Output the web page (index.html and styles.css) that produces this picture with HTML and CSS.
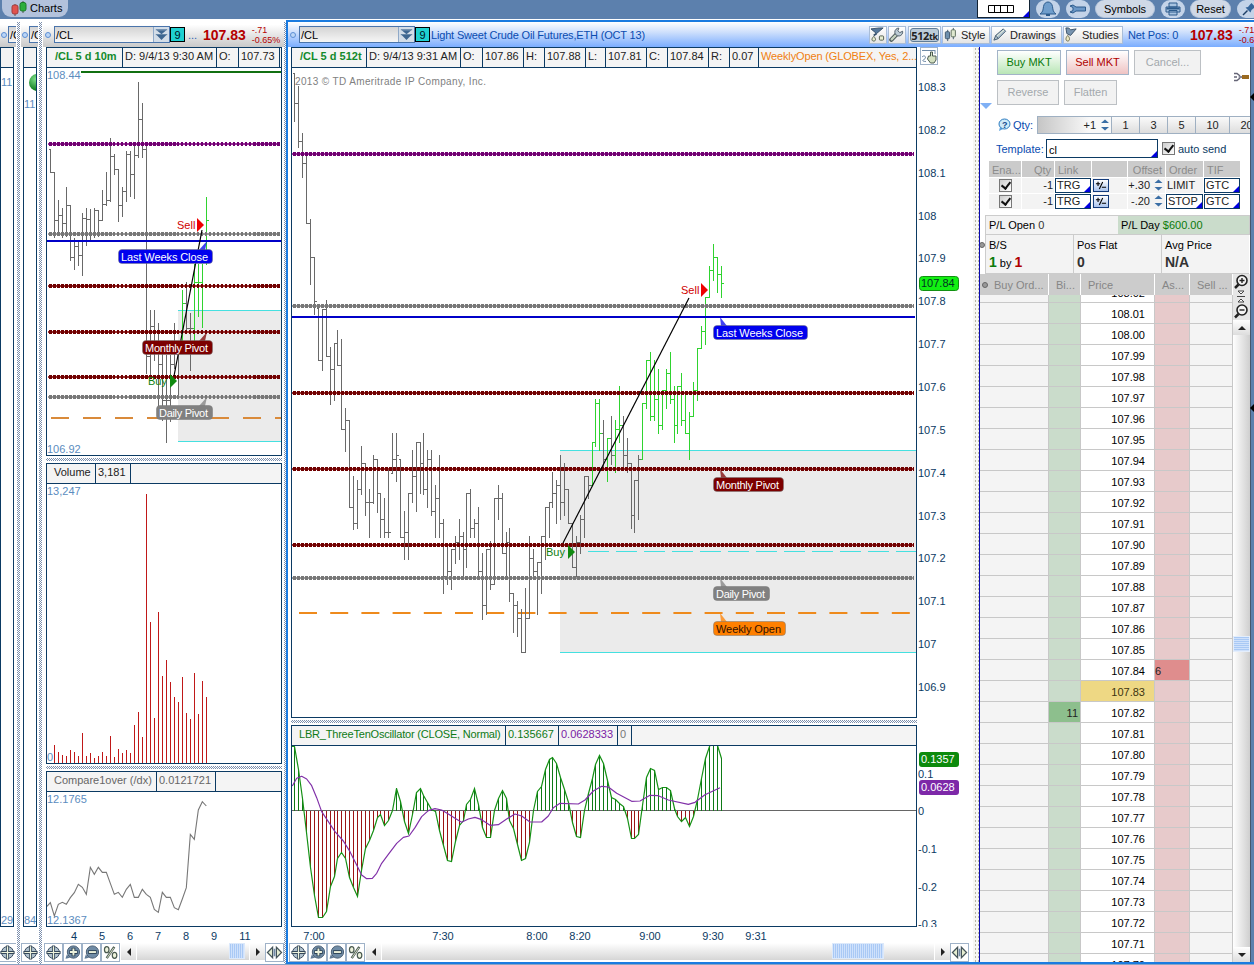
FILE: index.html
```html
<!DOCTYPE html>
<html lang="en">
<head>
<meta charset="utf-8">
<title>Charts</title>
<link rel="stylesheet" href="styles.css">
</head>
<body>
<svg class="defs" width="0" height="0">
  <defs>
    <symbol id="i-cross" viewBox="0 0 18 18"><circle cx="9" cy="9" r="6.3" fill="#aebfcb" stroke="#34475a"/><path d="M9 1.500v15M1.500 9h15" stroke="#34475a" stroke-width="3"/><path d="M9 2.500v13M2.500 9h13" stroke="#eef3dc" stroke-width="1.300"/></symbol>
    <symbol id="i-plus" viewBox="0 0 18 18"><path d="M3 11l-1.500 4.500 5-1z" fill="#5f7a96"/><circle cx="10" cy="8.500" r="6.500" fill="#6f8ba5" stroke="#43586d"/><path d="M10 4v9M5.500 8.500h9" stroke="#2d4255" stroke-width="4"/><path d="M10 4.800v7.400M6.300 8.500h7.400" stroke="#eef3dc" stroke-width="2"/></symbol>
    <symbol id="i-minus" viewBox="0 0 18 18"><path d="M3 11l-1.500 4.500 5-1z" fill="#5f7a96"/><circle cx="10" cy="8.500" r="6.500" fill="#6f8ba5" stroke="#43586d"/><path d="M5.500 8.500h9" stroke="#2d4255" stroke-width="4"/><path d="M6.300 8.500h7.400" stroke="#eef3dc" stroke-width="2"/></symbol>
    <symbol id="i-pct" viewBox="0 0 18 18"><path d="M13 3L5 15" stroke="#4a5a50" stroke-width="2.600"/><path d="M12.500 4L5.500 14.500" stroke="#dfe8cf" stroke-width="1"/><ellipse cx="5" cy="6" rx="2.400" ry="3.200" fill="#eef3dc" stroke="#4a5a50" stroke-width="1.300"/><ellipse cx="13.300" cy="12" rx="2.400" ry="3.200" fill="#eef3dc" stroke="#4a5a50" stroke-width="1.300"/></symbol>
    <symbol id="i-fit" viewBox="0 0 18 18"><path d="M7 3.500L1.500 9 7 14.500zM11 3.500L16.500 9 11 14.500z" fill="#e6eed2" stroke="#44545a" stroke-width="1.300"/><path d="M9 5v8" stroke="#6f8aa5" stroke-width="1.800"/></symbol>
    <symbol id="i-drop" viewBox="0 0 16 14"><path d="M2 1h12l-6 5zM2 7h12l-6 6z" fill="#3f6791"/><path d="M1 .5h14M1 6.500h14" stroke="#3f6791"/></symbol>
    <symbol id="i-wrench" viewBox="0 0 16 16"><path d="M2.500 13.500L9 7" stroke="#4c5a5a" stroke-width="4.500" stroke-linecap="round"/><path d="M2.800 13.200L9 7" stroke="#c6d3c0" stroke-width="2.300" stroke-linecap="round"/><path d="M14.500 4.500a4.200 4.200 0 1 1-4-3.300L9.500 4l2 2z" fill="#bccbd4" stroke="#4c5a66"/></symbol>
    <symbol id="i-flask" viewBox="0 0 16 16"><path d="M1 2l6 5 7-6-4 0z" fill="#56789c" stroke="#36506b"/><path d="M7 7l-3 2" stroke="#36506b" stroke-width="2"/><path d="M4 10c-3 3-2 5 0 5s3-2 0-5z" fill="#e6ecd0" stroke="#505c4c"/><rect x="10" y="9.500" width="4.500" height="4.500" rx="1" fill="#e6ecd0" stroke="#505c4c"/></symbol>
    <symbol id="i-funnel" viewBox="0 0 16 16"><path d="M2 1h3l2 2 6-1-6 7-4-2z" fill="#7894b0" stroke="#3c5268"/><path d="M4 9c-3 3-2 6 0 6s3-3 0-6z" fill="#ece8c2" stroke="#6a6a4c"/></symbol>
    <symbol id="i-candles" viewBox="0 0 16 16"><path d="M5 3v12M11 1v12" stroke="#3f566c"/><rect x="2.500" y="5" width="4.500" height="7.500" rx="1" fill="#6f90ae" stroke="#3f566c"/><rect x="8.700" y="3" width="4.500" height="7.500" rx="1" fill="#dfe8cf" stroke="#5b6b5b"/></symbol>
    <symbol id="i-pencil" viewBox="0 0 16 16"><path d="M2 14l2-5 8-7 2.500 2.500-8 8z" fill="#aec1cf" stroke="#3f566c"/><path d="M4 9l2.700 3.500" stroke="#3f566c"/><path d="M5 10l8-7" stroke="#eef3dc"/></symbol>
    <symbol id="i-spin" viewBox="0 0 10 14"><path d="M1 5l4-3.500L9 5zM1 9l4 3.500L9 9z" fill="#3a6ea5"/></symbol>
    <symbol id="i-mag" viewBox="0 0 16 16"><path d="M5.500 10.500L2 14" stroke="#222" stroke-width="2.500"/><circle cx="9" cy="6.500" r="5" fill="#f4f4f4" stroke="#222" stroke-width="1.600"/></symbol>
  </defs>
</svg>

<header class="topbar">
  <div class="tab"><svg width="18" height="17" viewBox="0 0 18 17"><path d="M5 4v12M13 1v12" stroke="#555"/><rect x="2" y="5" width="6" height="9" rx="2" fill="#e0524e" stroke="#a23c3c"/><rect x="10" y="2.500" width="6" height="8.500" rx="2" fill="#2fae3c" stroke="#1c7a28"/></svg>Charts</div>
  <div class="tools">
    <div class="layout-pick"><svg width="26" height="8" viewBox="0 0 26 8"><path d="M.5.500h25v7H.5zM6.500.500v7M12.500.500v7M19.500.500v7" fill="#fff" stroke="#000"/></svg><i class="corner"></i></div>
    <div class="round"><svg width="18" height="16" viewBox="0 0 18 16"><path d="M1 13c3-2 3-4 3.500-7.500C5 2.500 7 1 9 1s4 1.500 4.500 4.500C14 9 14 11 17 13z" fill="#6f9dcb" stroke="#2c5b8c"/><path d="M7 14h4" stroke="#2c5b8c" stroke-width="2"/></svg></div>
    <div class="round"><svg width="18" height="10" viewBox="0 0 18 10"><path d="M1 2l3-1 3 2h9.500v4H7L4 9 1 8l3-1.500v-3z" fill="#6b97c6" stroke="#2c5b8c"/></svg></div>
    <div class="pill pill-symbols">Symbols</div>
    <div class="round"><svg width="16" height="14" viewBox="0 0 16 14"><path d="M4 1h8v4H4zM1 5h14v5H1zM4 8.500h8V13H4z" fill="#a7c3e0" stroke="#2c5b8c"/><path d="M1.500 6.500h13" stroke="#2c5b8c" stroke-width="2"/></svg></div>
    <div class="pill pill-reset">Reset</div>
    <div class="round"><svg width="14" height="14" viewBox="0 0 14 14"><path d="M1 13l4.500-4.500" stroke="#1d3f66" stroke-width="1.500"/><path d="M3.500 5.500l5 5 1-2.500 2.500-2 1-1-3.500-4-1.500 1.500-2 2.500z" fill="#35659a"/></svg></div>
  </div>
</header>

<main class="workspace">
  <section class="strip strip-a">
    <div class="head"><i class="dot"></i><div class="symbox">/C</div></div>
    <div class="stripbox"><div class="stripinfo"></div><div class="striplabels"><span class="s1">11</span><span class="s2">29</span></div></div>
    <div class="foot"><span class="tb"><svg><use href="#i-cross"/></svg></span></div>
  </section>
  <div class="split"></div>
  <section class="strip strip-b">
    <div class="head"><i class="dot"></i><div class="symbox">/C</div></div>
    <div class="stripbox"><div class="stripinfo"></div><div class="striplabels"><i class="ball"></i><span class="s1">11</span><span class="s2">84</span></div></div>
    <div class="foot"><span class="tb"><svg><use href="#i-cross"/></svg></span></div>
  </section>
  <div class="split"></div>

  <section class="left">
    <div class="head"><i class="dot"></i><div class="symbox sym">/CL<span class="drop"><svg width="13" height="12"><use href="#i-drop"/></svg></span></div><b class="nine">9</b><span class="more">...</span><b class="last">107.83</b><span class="chg">-.71<br>-0.65%</span></div>
    <div class="info"><span class="study" style="width:76px">/CL 5 d 10m</span><span style="width:94px">D: 9/4/13 9:30 AM</span><span style="width:22px">O:</span><span style="width:41px">107.73</span></div>
    <svg class="plot" id="left-price" width="236" height="388" viewBox="46 68 236 388"></svg>
    <div class="hsplit"></div>
    <div class="info"><span class="ind" style="width:49px">Volume</span><span style="width:35px">3,181</span></div>
    <svg class="plot" id="left-vol" width="236" height="280" viewBox="46 484 236 280"></svg>
    <div class="hsplit"></div>
    <div class="info dim"><span class="ind" style="width:110px">Compare1over (/dx)</span><span style="width:59px">0.0121721</span></div>
    <svg class="plot" id="left-cmp" width="236" height="135" viewBox="46 792 236 135"></svg>
    <svg class="times" id="left-times" width="236" height="16" viewBox="46 927 236 16"></svg>
    <div class="foot"><span class="tb"><svg><use href="#i-cross"/></svg></span><span class="tb"><svg><use href="#i-plus"/></svg></span><span class="tb"><svg><use href="#i-minus"/></svg></span><span class="tb"><svg><use href="#i-pct"/></svg></span><div class="scroll"><i class="arr al"></i><div class="track"><i class="thumb thumb-l"></i></div><i class="arr ar"></i></div><span class="tb"><svg><use href="#i-fit"/></svg></span></div>
  </section>
  <div class="split split-c"></div>

  <section class="active">
    <div class="head head-active"><i class="dot"></i><div class="symbox sym">/CL<span class="drop"><svg width="13" height="12"><use href="#i-drop"/></svg></span></div><b class="nine">9</b><span class="title">Light Sweet Crude Oil Futures,ETH (OCT 13)</span>
      <div class="menu"><span class="mb"><svg><use href="#i-flask"/></svg></span><span class="mb"><svg><use href="#i-wrench"/></svg></span><span class="mb mb-tk"><b>512<small>tk</small></b></span><span class="mb mb-style"><svg><use href="#i-candles"/></svg>Style</span><span class="mb mb-draw"><svg><use href="#i-pencil"/></svg>Drawings</span><span class="mb mb-stud"><svg><use href="#i-funnel"/></svg>Studies</span></div>
      <span class="net">Net Pos: 0</span><b class="last">107.83</b><span class="chg">-.71<br>-0.65%</span></div>
    <div class="body">
      <div class="charts">
        <div class="row">
          <div class="col">
            <div class="info"><span class="study" style="width:75px">/CL 5 d 512t</span><span style="width:94px">D: 9/4/13 9:31 AM</span><span style="width:22px">O:</span><span style="width:41px">107.86</span><span style="width:21px">H:</span><span style="width:41px">107.88</span><span style="width:20px">L:</span><span style="width:41px">107.81</span><span style="width:21px">C:</span><span style="width:41px">107.84</span><span style="width:21px">R:</span><span style="width:29px">0.07</span><span class="orange">WeeklyOpen (GLOBEX, Yes, 2...</span></div>
            <svg class="plot" id="main-price" width="626" height="650" viewBox="291 68 626 650"></svg>
          </div>
          <div class="axis">
            <span class="hand"><svg width="16" height="16" viewBox="0 0 16 16"><path d="M1 2.500h13M14 2v4M1 9c3-3 5 1 2 2.500s0 2 2 2" fill="none" stroke="#6f8aa5"/><path d="M7.500 8h2V4h2v4h3.500v4l-2 3h-3.500l-3-4z" fill="#d3dfc0" stroke="#4a5a50"/></svg></span>
            <svg id="axis-price" width="56" height="650" viewBox="917 68 56 650"></svg>
          </div>
        </div>
        <div class="hsplit hsplit-m"></div>
        <div class="row">
          <div class="col">
            <div class="info"><span class="ind green osc-name" style="width:214px">LBR_ThreeTenOscillator (CLOSE, Normal)</span><span class="green" style="width:53px">0.135667</span><span class="purple" style="width:59px">0.0628333</span><span class="grey" style="width:14px">0</span></div>
            <svg class="plot" id="main-osc" width="626" height="181" viewBox="291 746 626 181"></svg>
          </div>
          <svg id="axis-osc" width="56" height="202" viewBox="917 725 56 202"></svg>
        </div>
        <svg class="times" id="main-times" width="680" height="16" viewBox="291 927 680 16"></svg>
        <div class="foot"><span class="tb"><svg><use href="#i-cross"/></svg></span><span class="tb"><svg><use href="#i-plus"/></svg></span><span class="tb"><svg><use href="#i-minus"/></svg></span><span class="tb"><svg><use href="#i-pct"/></svg></span><div class="scroll"><i class="arr al"></i><div class="track"><i class="thumb thumb-m"></i></div><i class="arr ar"></i></div><span class="tb"><svg><use href="#i-fit"/></svg></span></div>
      </div>
      <div class="gutter"><i class="fold"></i></div>
      <aside class="trade">
        <svg class="tool" width="16" height="10" viewBox="0 0 16 10"><path d="M1 1.500h3l2.500 2v3l-2.500 2H1M1 5h3" fill="none" stroke="#667" stroke-width="1.500"/><path d="M6 5h3" stroke="#889" stroke-width="2"/><path d="M9 5h7" stroke="#9a6a20" stroke-width="4"/></svg>
        <div class="btns"><span class="btn buy">Buy MKT</span><span class="btn sell">Sell MKT</span><span class="btn off w67">Cancel...</span></div>
        <div class="btns btns2"><span class="btn off w62">Reverse</span><span class="btn off w53">Flatten</span></div>
        <div class="qty"><svg width="14" height="14" viewBox="0 0 14 14"><path d="M3 9l-1 4 4-2z" fill="#5aa0dc"/><ellipse cx="7.500" cy="6" rx="5.500" ry="5" fill="#cfeaf8" stroke="#2c7cc0"/><text x="5" y="9.500" class="q">?</text></svg><label>Qty:</label><span class="num">+1<svg width="12" height="14"><use href="#i-spin"/></svg></span><span class="q28">1</span><span class="q28">3</span><span class="q28">5</span><span class="q34">10</span><span class="q34">20</span></div>
        <div class="tpl"><label>Template:</label><span class="tin">cl<i class="corner"></i></span><i class="chk"></i><span class="auto">auto send</span></div>
        <div class="orders">
          <b>Ena...</b><b class="r">Qty</b><b>Link</b><b></b><b class="r">Offset</b><b>Order</b><b>TIF</b>
          <span class="c"><i class="chk"></i></span><span class="r">-1</span><span class="pick">TRG<i class="corner"></i></span><span><svg class="pm" width="16" height="13" viewBox="0 0 16 13"><path d="M2 4.500h5M4.500 2v5M6 10.500L10 2.500M9 8.500h5" stroke="#000" stroke-width="1.300"/></svg></span><span class="r">+.30<svg width="11" height="14"><use href="#i-spin"/></svg></span><span>LIMIT</span><span class="pick">GTC<i class="corner"></i></span>
          <span class="c"><i class="chk"></i></span><span class="r">-1</span><span class="pick">TRG<i class="corner"></i></span><span><svg class="pm" width="16" height="13" viewBox="0 0 16 13"><path d="M2 4.500h5M4.500 2v5M6 10.500L10 2.500M9 8.500h5" stroke="#000" stroke-width="1.300"/></svg></span><span class="r">-.20<svg width="11" height="14"><use href="#i-spin"/></svg></span><span class="pick">STOP<i class="corner"></i></span><span class="pick">GTC<i class="corner"></i></span>
        </div>
        <div class="pl"><span>P/L Open <u>0</u></span><span class="day">P/L Day <u>$600.00</u></span></div>
        <div class="pos"><i class="gdot side"></i><div>B/S<p><b class="g">1</b> by <b class="rd">1</b></p></div><div>Pos Flat<p><b>0</b></p></div><div>Avg Price<p><b>N/A</b></p></div></div>
        <div class="ladder">
          <div class="ltable">
            <div class="lhead"><span><i class="gdot"></i>Buy Ord...</span><span>Bi...</span><span>Price</span><span>As...</span><span>Sell ...</span></div>
            <div class="lbody"><div id="rows"></div></div>
          </div>
          <div class="vbar"><svg width="16" height="16" viewBox="0 0 16 16"><use href="#i-mag"/><path d="M6.500 6.500h5M9 4v5" stroke="#222" stroke-width="1.400"/></svg><svg width="16" height="13" viewBox="0 0 16 13"><path d="M4 6.500h8" stroke="#444"/><path d="M5 1h6L8 4zM5 12h6L8 9z" fill="#fff" stroke="#444"/></svg><svg width="16" height="17" viewBox="0 0 16 16"><use href="#i-mag"/><path d="M6.500 6.500h5" stroke="#222" stroke-width="1.400"/></svg><i class="arr au"></i><div class="vtrack"><i class="vthumb"></i></div><i class="arr ad"></i></div>
        </div>
      </aside>
      <div class="edge"><i></i><i class="e2"></i></div>
    </div>
  </section>
</main>
<script src="charts.js"></script>
</body>
</html>
```
FILE: styles.css
```css
* { box-sizing: border-box; }
body { margin: 0; width: 1254px; height: 965px; overflow: hidden; background: #5c80ad; font: 11px/14px "Liberation Sans", Arial, sans-serif; color: #222; display: flex; flex-direction: column; }
.defs { position: absolute; }
svg { display: block; flex: none; }
svg text { font: 11px "Liberation Sans", Arial, sans-serif; }
i, em { font-style: normal; }

.topbar { height: 19px; flex: none; display: flex; justify-content: space-between; background: #5c80ad; }
.tab { width: 66px; height: 17px; margin-left: 2px; padding-left: 8px; display: flex; align-items: center; gap: 2px; background: #b3c2dc; border-radius: 0 0 9px 9px; font-size: 11px; line-height: 19px; color: #000; }
.tools { display: flex; width: 277px; overflow: hidden; }
.layout-pick { width: 53px; height: 18px; flex: none; background: #fff; border: 1px solid #123; border-top: 0; display: flex; align-items: center; padding-left: 10px; margin-right: 6px; position: relative; }
.round { width: 24px; height: 18px; flex: none; border-radius: 9px; background: #c3d3e8; display: flex; align-items: center; justify-content: center; margin-right: 6px; }
.pill { height: 18px; flex: none; background: #cfd8e6; border: 1px solid #b4c4da; border-top: 0; border-radius: 9px; text-align: center; line-height: 19px; color: #000; margin: 0 6px 0 -1px; }
.pill-symbols { width: 60px; }
.pill-reset { width: 41px; }

.workspace { display: flex; flex: 1; height: 946px; background: #fff; border-bottom: 1px solid #8aa4c4; }
.split { width: 5px; flex: none; margin-top: 3px; background: repeating-conic-gradient(#7d90ae 0 25%, #fff 0 50%) 1px 0 / 2px 2px; border-left: 1px solid #fff; border-right: 1px solid #fff; }
.split-c { width: 2px; border: 0; }
.strip { display: flex; flex-direction: column; overflow: hidden; flex: none; }
.strip-a { width: 16px; }
.strip-b { width: 17px; }
.head { height: 25px; margin-top: 3px; flex: none; display: flex; align-items: center; background: linear-gradient(#fff, #fff 10%, #c9c9c9); white-space: nowrap; overflow: hidden; }
.dot { width: 6px; height: 6px; flex: none; border: 1px solid #5d8fd4; border-radius: 50%; background: #bcd6f6; margin: 0 3px 0 2px; }
.strip .dot { margin-left: 1px; margin-right: 1px; }
.symbox { height: 17px; border: 1px solid #4a74ab; background: linear-gradient(#d4d4d4, #f6f6f6); padding-left: 1px; line-height: 17px; color: #000; flex: none; display: flex; justify-content: space-between; }
.sym { width: 116px; }
.drop { width: 16px; border-left: 1px solid #8fa9c8; background: #d3dde8; display: flex; align-items: center; justify-content: center; }
.nine { width: 15px; height: 15px; flex: none; border: 1px solid #000; background: #1fd0d0; text-align: center; line-height: 14px; font-weight: normal; color: #012; }
.more { color: #2a62b8; margin: 0 5px 0 3px; width: 10px; }
.last { font-size: 14px; color: #b40000; margin-right: 6px; }
.chg { font-size: 9px; line-height: 10px; color: #b40000; padding-top: 1px; }
.stripbox { width: 14px; height: 880px; border: 1px solid #0b3a63; background: #fff; }
.strip-b .stripbox { margin-left: 2px; }
.stripinfo { height: 20px; border-bottom: 1px solid #0b3a63; background: #f3f3f3; }
.striplabels { position: relative; color: #5b8cc0; height: 858px; overflow: hidden; }
.s1, .s2 { position: absolute; left: 0; top: 7px; }
.strip-b .s1 { top: 29px; }
.s2 { top: 845px; }
.ball { position: absolute; left: 5px; top: 6px; width: 17px; height: 17px; border-radius: 50%; background: radial-gradient(circle at 40% 30%, #7fe08a, #128022 70%); }
.foot { display: flex; height: 19px; margin-top: 0; flex: none; align-items: stretch; }
.strip .foot { margin-top: 16px; margin-left: -2px; }
.strip-b .foot { margin-left: 0; }
.tb { width: 19px; flex: none; border: 1px solid #9fb2c8; background: #fff; }
.tb svg { width: 17px; height: 17px; }
.scroll { flex: 1; display: flex; gap: 1px; margin-left: 1px; }
.arr { width: 15px; height: 17px; flex: none; background: linear-gradient(#fff, #ddd); display: flex; align-items: center; justify-content: center; }
.arr::after { content: ""; border: 4px solid transparent; }
.al::after { border-right-color: #222; border-left: 0; }
.ar::after { border-left-color: #222; border-right: 0; }
.au::after { border-bottom-color: #222; border-top: 0; }
.ad::after { border-top-color: #222; border-bottom: 0; }
.track { flex: 1; height: 17px; background: linear-gradient(#fff, #d6d6d6); display: flex; }
.thumb { height: 16px; background: repeating-linear-gradient(90deg, #a9c9f5 0 1px, #cfe1fb 1px 2px); border: 1px solid #dce9fb; }
.thumb-l { width: 16px; margin-left: 92px; }
.thumb-m { width: 52px; margin-left: 450px; }

.left { width: 241px; flex: none; display: flex; flex-direction: column; }
.left > .info, .left > .plot, .left > .hsplit, .left > .times { margin-left: 3px; }
.left > .foot { margin-left: 1px; width: 240px; }
.left > .head, .strip > .head { color: #000; }
.info { height: 21px; flex: none; width: 236px; border: 1px solid #0b3a63; background: #f4f4f4; display: flex; white-space: nowrap; overflow: hidden; }
.info span { border-right: 1px solid #0b3a63; padding-left: 2px; line-height: 17px; flex: none; overflow: hidden; }
.info .study { padding-left: 8px; font-weight: bold; color: #138a2c; }
.info .ind { padding-left: 7px; }
.info.dim { color: #666; }
.info .osc-name { letter-spacing: -.2px; }
.info .orange { color: #f08010; flex: 1; border: 0; padding-right: 0; letter-spacing: -.14px; }
.green { color: #0e7a16; }
.purple { color: #7a22a4; }
.grey { color: #777; }
.hsplit { height: 7px; width: 236px; flex: none; background: repeating-conic-gradient(#7d90ae 0 25%, #fff 0 50%) 0 0 / 2px 2px content-box; padding: 2px 0; }

.active { width: 968px; flex: none; border: 2px solid #1a7be0; border-right: 0; margin-top: 1px; display: flex; flex-direction: column; height: 944px; }
.head-active { margin-top: 0; height: 25px; background: linear-gradient(#fff, #cfe0fc 40%, #7aadff); }
.title { color: #0a4cb0; margin-left: 1px; width: 438px; flex: none; letter-spacing: -.17px; }
.menu { display: flex; gap: 1px; height: 18px; flex: none; }
.mb { height: 18px; border: 1px solid #a9bdd8; background: linear-gradient(#fff, #e4e4e4); display: flex; align-items: center; gap: 1px; width: 18px; }
.mb svg { width: 15px; height: 15px; }
.mb-tk { width: 33px; margin-left: 1px; padding: 1px; }
.mb-tk b { flex: 1; height: 14px; border-radius: 3px; background: #bccbd8; border: 1px solid #5f7c98; text-align: center; font: bold 11px/13px "Open Sans", "Liberation Sans", sans-serif; letter-spacing: -.4px; }
.mb-tk small { font-size: 9px; }
.mb-style { width: 48px; gap: 3px; }
.mb-draw { width: 71px; gap: 3px; }
.mb-stud { width: 60px; gap: 3px; }
.net { color: #0a4cb0; margin-left: 5px; width: 62px; flex: none; letter-spacing: -.1px; }
.body { display: flex; flex: 1; min-height: 0; }
.charts { width: 685px; flex: none; display: flex; flex-direction: column; }
.row { display: flex; margin-left: 3px; }
.row .info { width: 626px; }
.hsplit-m { width: 626px; margin-left: 3px; }
.charts .times { margin-left: 3px; }
.charts .foot { margin-left: 1px; width: 680px; }
.axis { position: relative; padding-top: 21px; }
.hand { position: absolute; left: 3px; top: 0; border: 1px solid #9fb2c8; padding: 0; }
.gutter { width: 7px; flex: none; background: radial-gradient(circle, #b5b5a5 .7px, transparent .8px) 1px 0 / 3px 4px #f6f6f3; border-right: 1px solid #0b0bb0; position: relative; }
.fold { position: absolute; left: 7px; top: 56px; border: 6px solid transparent; border-top-color: #7fb0f5; border-bottom: 0; z-index: 1; }

.trade { width: 270px; flex: none; position: relative; display: flex; flex-direction: column; background: #fff; overflow: hidden; }
.tool { position: absolute; left: 253px; top: 25px; }
.btns { display: flex; gap: 5px; padding: 3px 0 0 17px; height: 28px; flex: none; }
.btns2 { padding-top: 5px; height: 32px; }
.btn { height: 25px; line-height: 22px; text-align: center; border: 1px solid #a3b4c8; }
.buy { width: 64px; background: linear-gradient(#fff, #b9e6b6); color: #0a7a0a; }
.sell { width: 63px; background: linear-gradient(#fff, #efc3c3); color: #b00000; }
.off { background: #f2f2f2; color: #a3a9ad; border-color: #bcc0c4; }
.w67 { width: 67px; }
.w62 { width: 62px; }
.w53 { width: 53px; }
.qty { display: flex; align-items: center; padding-left: 17px; height: 18px; margin-top: 9px; flex: none; white-space: nowrap; }
.q { fill: #124a8c; font-weight: bold; font-size: 9px; }
.qty label, .tpl label { color: #0a4cb0; }
.qty label { width: 26px; padding-left: 2px; flex: none; }
.num { width: 75px; flex: none; height: 18px; border: 1px solid #9fb0c2; background: linear-gradient(90deg, #c6c6c6, #f8f8f8 70%); display: flex; justify-content: flex-end; align-items: center; gap: 3px; }
.q28, .q34 { width: 28px; flex: none; height: 18px; line-height: 16px; text-align: center; background: linear-gradient(#fafafa, #ddd); border: 1px solid #9fb0c2; border-left: 0; }
.q34 { width: 34px; }
.tpl { display: flex; align-items: center; height: 19px; margin-top: 5px; padding-left: 16px; flex: none; }
.tpl label { width: 50px; }
.tin { width: 112px; height: 19px; border: 1px solid #0b3a63; position: relative; padding: 2px 2px; line-height: 17px; color: #000; margin-right: 4px; }
.corner { position: absolute; right: 0; bottom: 0; border: 3.5px solid #0000e0; border-top-color: transparent; border-left-color: transparent; }
.chk { width: 13px; height: 13px; border: 1px solid #777; background: linear-gradient(135deg, #ccc, #fff); display: inline-block; position: relative; }
.chk::after { content: ""; position: absolute; left: 3px; top: 0; width: 4px; height: 7px; border: solid #111; border-width: 0 2px 2px 0; transform: rotate(38deg); }
.auto { color: #0b3a63; margin-left: 3px; }
.orders { display: grid; grid-template-columns: 32px 32px 36px 35px 37px 37px 36px; grid-template-rows: 16px 15px 15px; gap: 1px; margin: 3px 0 0 9px; width: 251px; flex: none; height: 48px; }
.orders > * { background: #f3f3f3; white-space: nowrap; overflow: hidden; line-height: 15px; padding-left: 1px; position: relative; }
.orders b { background: #cbcbcb; color: #8b8b8b; font-weight: normal; padding-left: 3px; line-height: 18px; }
.orders .r { display: flex; justify-content: flex-end; padding-right: 3px; gap: 3px; }
.orders span.r { padding-right: 1px; }
.orders .c { padding-left: 10px; line-height: 12px; padding-top: 1px; }
.orders .pick { border: 1px solid #0b3a63; background: #fff; line-height: 13px; }
.pm { margin-top: 1px; border: 1px solid #123a7a; background: linear-gradient(#fff, #a9c4ee); }
.pl { display: flex; height: 20px; margin: 6px 0 0 5px; line-height: 18px; flex: none; border: 1px solid #ccc; color: #000; }
.pl span { width: 132px; padding-left: 3px; background: #f3f3f3; }
.pl .day { flex: 1; background: #cadccb; }
.pl u { text-decoration: none; color: #333; }
.pl .day u { color: #0a7a0a; }
.pos { display: flex; height: 39px; margin-left: 5px; flex: none; color: #000; position: relative; }
.pos div { width: 88px; border: 1px solid #ccc; border-top: 0; border-right: 0; background: #f3f3f3; padding: 3px 0 0 3px; flex: none; }
.pos p { margin: 3px 0 0; }
.pos p b { font-size: 14px; color: #333; }
.pos p .g { color: #0a7a0a; }
.pos p .rd { color: #b00000; }
.ladder { display: flex; flex: 1; min-height: 0; }
.ltable { width: 253px; flex: none; display: flex; flex-direction: column; overflow: hidden; }
.lhead, .lrow { display: grid; grid-template-columns: 69px 32px 74px 35px 43px; flex: none; }
.lhead { height: 21px; background: #ccc; color: #868686; line-height: 22px; }
.lhead span { border-right: 1px solid #fff; padding-left: 7px; white-space: nowrap; }
.lhead span:first-child { padding-left: 2px; }
.gdot { display: inline-block; width: 6px; height: 6px; border-radius: 50%; background: #999; border: 1px solid #666; margin: 0 6px 1px 0; }
.gdot.side { position: absolute; left: -6px; top: 7px; margin: 0; }
.lbody { flex: 1; min-height: 0; overflow: hidden; }
#rows { margin-top: -13px; }
.lrow { height: 21px; line-height: 23px; }
.lrow span { border-right: 1px solid #c8c8c8; border-bottom: 1px solid #c8c8c8; background: #f4f4f4; overflow: hidden; }
.lrow .bid { background: #cadccb; text-align: right; padding-right: 2px; }
.lrow .px { background: #fff; color: #000; text-align: right; padding-right: 9px; }
.lrow .ask { background: #e7cacb; padding-left: 0; }
.lrow .bid.hit { background: #8dbf8d; }
.lrow .ask.hit { background: #df8d8d; }
.lrow .px.hit { background: #eed884; color: #3c3410; }
.vbar { width: 17px; display: flex; flex-direction: column; background: #e6e6e6; }
.vbar .arr { height: 15px; width: 17px; }
.vtrack { flex: 1; background: linear-gradient(90deg, #fff, #cfcfcf); padding-top: 301px; }
.vthumb { display: block; height: 16px; background: repeating-linear-gradient(#a9c9f5 0 1px, #cfe1fb 1px 2px); border: 1px solid #e4eefc; }
.edge { flex: 1; background: #5c80ad; border-left: 1px solid #46566c; position: relative; }
.edge i { position: absolute; right: 0; top: 46px; border: 4px solid transparent; border-right: 4px solid #000; border-left: 0; }
.edge .e2 { top: 357px; }

.ax { fill: #0b3a63; }
.lite { fill: #5b8cc0; }
.bar { fill: none; stroke: #696969; stroke-width: 1; }
.bar.up { stroke: #2fd32f; }
.crisp { shape-rendering: crispEdges; }
```
FILE: charts.js
```js
const add = (id, html) => { document.getElementById(id).innerHTML += html; };
const text = (x, y, s, cls = 'ax', extra = '') => `<text x="${x}" y="${y}" class="${cls}" ${extra}>${s}</text>`;
const line = (x1, y1, x2, y2, color, w = 1, extra = '') =>
  `<line x1="${x1}" y1="${y1}" x2="${x2}" y2="${y2}" stroke="${color}" stroke-width="${w}" ${extra}/>`;

// A pivot level: thin line carrying small square beads.
const beads = (x1, x2, y, light, dark) => `<g class="crisp">${line(x1, y, x2, y, light, 2)}${line(x1 + 1, y, x2, y, dark, 4, 'stroke-dasharray="2.500 1.500"')}</g>`;

// x,high,low,close[,g] for each bar; g marks a rising (green) bar.
function bars(data) {
  let prev = null, grey = '', green = '';
  data.trim().split(/\s+/).forEach(item => {
    const [x, h, l, c, g] = item.split(',');
    const cx = +x + .5;
    const o = prev === null ? +h : Math.min(Math.max(prev, +h), +l);
    const d = `M${cx} ${h}V${+l + 1}M${cx - 1.5} ${o + .5}H${cx}M${cx} ${+c + .5}h2`;
    if (g) green += d; else grey += d;
    prev = +c;
  });
  return `<g class="crisp"><path class="bar" d="${grey}"/><path class="bar up" d="${green}"/></g>`;
}

function tag(x, y, w, label, fill, tip, color = '#fff') {
  const base = tip[0] < x + w / 2 ? x + 8 : x + w - 14;
  return `<path d="M${base} ${y + 1}L${tip[0]} ${tip[1]}L${base + 6} ${y + 1}z" fill="${fill}" opacity=".75"/>
    <rect x="${x + .5}" y="${y + .5}" width="${w - 1}" height="14" rx="3.500" fill="${fill}" stroke="#777" stroke-opacity=".5"/>
    <text x="${x + 3}" y="${y + 12}" fill="${color}" textLength="${w - 8}">${label}</text>`;
}
const frame = (x, y, w, h) => `<path class="crisp" d="M${x + .5} ${y}V${y + h - .5}H${x + w - .5}V${y}" fill="none" stroke="#0b3a63"/>`;
const MAROON = ['#983030', '#700000'], GREY = ['#999', '#777'], VIOLET = ['#983098', '#700070'];

const mainBars = `294,73,121,103 298,86,147,141 302,133,177,163 306,154,223,223 310,219,284,257 314,257,314,301
318,308,360,360 322,309,370,309 326,300,356,356 330,347,404,369 334,343,400,343 337,330,365,365 341,339,429,429
345,408,451,420 349,420,507,507 353,476,529,523 357,480,528,489 361,446,494,463 365,463,515,502 369,489,537,502
373,455,503,459 377,459,512,493 380,493,537,519 384,498,537,532 388,469,537,532 392,433,473,459 396,433,481,455
400,459,537,537 404,511,559,532 408,493,559,493 412,450,502,476 416,442,511,442 420,442,493,463 423,433,494,489
427,450,507,459 431,450,515,511 435,485,537,498 439,455,537,523 443,519,593,576 447,545,584,571 451,549,589,549
455,536,563,542 459,519,559,536 463,532,577,549 466,493,567,493 470,489,537,528 474,519,537,523 478,507,577,571
482,553,619,605 486,549,614,549 490,541,589,584 494,498,584,498 498,485,519,498 502,493,553,553 506,532,576,542
509,528,601,593 513,593,632,605 517,601,636,618 521,609,652,652 525,588,652,618 529,536,618,558 533,549,577,571
537,562,614,562 541,536,593,536 545,507,559,507 549,502,537,502 552,472,507,493 556,480,523,485 560,455,519,502
564,463,515,489 568,489,523,523 572,523,567,567 576,536,577,542 580,515,553,519 584,476,537,476 588,476,498,485
592,442,485,442,g 595,399,446,403,g 599,399,450,433,g 603,420,470,459 607,438,481,438,g 611,416,464,455
615,420,472,429,g 619,386,442,425,g 623,416,468,455 627,438,472,463 631,463,528,515 634,480,532,480 638,455,519,459
642,403,459,403,g 646,360,408,360,g 650,352,420,416,g 654,360,420,399,g 658,369,433,425,g 662,390,429,390,g
666,369,408,373,g 670,352,403,399,g 674,386,442,425,g 677,386,433,386,g 681,373,425,420,g 685,395,433,433,g
689,412,459,416,g 693,382,416,390,g 697,348,400,348,g 701,326,348,331,g 705,297,344,297,g 709,266,297,270,g
713,244,280,257,g 717,257,292,274,g 721,266,297,283,g`;

const left = `50,149,172,172 54,172,237,220 58,200,235,215 62,208,237,223 66,187,236,205 70,205,260,257 74,238,269,246
78,242,265,255 82,213,275,218 86,208,245,219 90,209,241,234 94,208,237,210 98,210,236,220 102,190,220,204
106,172,205,200 110,138,201,156 114,154,174,169 118,169,221,205 122,187,216,191 126,151,201,154 130,151,196,174
134,145,198,155 138,82,157,119 142,103,157,149 146,145,373,356 150,310,378,326 154,310,360,353 158,323,407,364
162,342,420,400 166,355,442,400 170,355,421,364 174,323,368,345 178,345,396,345 182,290,340,303,g 186,282,332,328
190,313,370,328 194,264,340,282,g 198,264,316,282,g 202,264,327,250,g 206,197,264,220,g`;

add('left-price', `<rect x="178" y="311" width="103" height="131" fill="#ebebeb"/>
  ${text(47, 79, '108.44', 'lite')}${text(47, 453, '106.92', 'lite')}
  ${line(81, 72, 281, 72, '#117011', 2)}
  ${line(178, 310.5, 281, 310.5, '#45e0e0')}${line(178, 441.5, 281, 441.5, '#45e0e0')}
  ${line(51, 418, 281, 418, '#d98a3a', 2, 'stroke-dasharray="18 14"')}
  ${bars(left)}
  ${beads(48, 280, 144, ...VIOLET)}${beads(48, 280, 234, ...GREY)}${line(46, 241, 281, 241, '#0000c8', 2)}
  ${[286, 332, 377].map(y => beads(48, 280, y, ...MAROON)).join('')}${beads(48, 280, 397, ...GREY)}
  ${line(174, 376, 202, 230, '#000', 1.2)}
  ${text(177, 229, 'Sell', '', 'fill="#d00000"')}<path d="M197 218l7 7-7 7z" fill="#e00"/>
  ${text(148, 385, 'Buy', '', 'fill="#108010"')}<path d="M170 374l7 7-7 7z" fill="#108a10"/>
  ${tag(118, 249, 95, 'Last Weeks Close', '#0000ee', [207, 241])}
  ${tag(142, 340, 71, 'Monthly Pivot', '#7c0000', [207, 332])}
  ${tag(156, 405, 57, 'Daily Pivot', '#808080', [207, 397])}
  ${frame(46, 68, 236, 388)}`);

const tops = [745,752,755,756,750,752,756,733,756,753,758,756,752,756,736,757,749,753,750,753,725,712,737,494,622,718,612,676,660,682,697,702,677,713,719,673,714,681,697];
add('left-vol', text(47, 495, '13,247', 'lite') + text(47, 761, '0', 'lite') +
  '<g class="crisp">' + tops.map((y, i) => line(54.5 + 4 * i, y, 54.5 + 4 * i, 763, '#c01818')).join('') + '</g>' + frame(46, 484, 236, 280));

add('left-cmp', text(47, 803, '12.1765', 'lite') + text(47, 924, '12.1367', 'lite') +
  `<g transform="translate(0 715) scale(.33333)"><polyline fill="none" stroke="#777" stroke-width="3.300" points="141,574 151,563 163,603 175,568 187,562 199,568 211,548 223,533 235,508 247,517 259,538 271,457 283,478 295,457 307,472 319,472 331,505 343,538 355,532 367,547 379,523 391,508 403,547 415,547 427,523 439,538 451,547 463,583 475,592 487,532 499,547 511,547 523,578 535,584 547,552 559,518 571,358 583,373 595,285 607,260 619,273"/></g>` +
  frame(46, 792, 236, 135));
add('left-times', [[74, 4], [102, 5], [130, 6], [158, 7], [186, 8], [214, 9], [245, 11]].map(([x, s]) => text(x, 940, s, 'ax', 'text-anchor="middle"')).join(''));

add('main-price', `<rect x="560" y="451" width="356" height="202" fill="#ebebeb"/>
  ${text(295, 85, '2013 © TD Ameritrade IP Company, Inc.', '', 'fill="#808080" textLength="191" style="font-size:10px"')}
  ${line(560, 450.5, 916, 450.5, '#45e0e0')}${line(560, 652.5, 916, 652.5, '#45e0e0')}
  ${line(588, 551.5, 916, 551.5, '#45e0e0', 1, 'stroke-dasharray="21 7"')}
  ${line(299, 613, 912, 613, '#ee8a1c', 2, 'stroke-dasharray="18 13.200"')}
  ${bars(mainBars)}
  ${beads(292, 914, 154, ...VIOLET)}${beads(292, 914, 306, ...GREY)}${line(292, 317, 915, 317, '#0000c8', 2)}
  ${[393, 469, 545].map(y => beads(292, 914, y, ...MAROON)).join('')}${beads(292, 914, 578, ...GREY)}
  ${line(563, 543, 689, 298, '#000', 1.200)}
  ${text(681, 294, 'Sell', '', 'fill="#d00000"')}<path d="M701 283l7 7-7 7z" fill="#e00"/>
  ${text(546, 556, 'Buy', '', 'fill="#108010"')}<path d="M568 545l7 7-7 7z" fill="#108a10"/>
  ${tag(713, 325, 95, 'Last Weeks Close', '#0000ee', [720, 317])}
  ${tag(713, 477, 71, 'Monthly Pivot', '#7c0000', [720, 469])}
  ${tag(713, 586, 57, 'Daily Pivot', '#808080', [720, 578])}
  ${tag(713, 621, 73, 'Weekly Open', '#ff8000', [720, 613], '#301000')}
  ${frame(291, 68, 626, 650)}`);

const levels = ['108.3', '108.2', '108.1', '108', '107.9', '107.8', '107.7', '107.6', '107.5', '107.4', '107.3', '107.2', '107.1', '107', '106.9'];
add('axis-price', levels.map((s, i) => text(918, Math.round(91 + i * 42.86), s)).join('') +
  `<rect x="919.500" y="276.500" width="39" height="14" rx="3" fill="#12f012" stroke="#129012"/>${text(921, 287, '107.84', '', 'fill="#032"')}`);

const osc = `291,746 294,746 298,769 302,798 306,832 310,867 314,895 318,917 322,917 326,911 330,886 334,876 337,858 341,852 345,858 349,877 353,887 357,896 361,870 365,848 369,840 373,830 377,817 380,814 384,825 388,820 392,810 396,788 400,801 404,821 408,833 412,814 416,792 420,788 423,795 427,802 431,809 435,811 439,830 443,845 447,860 451,861 455,841 459,825 463,820 466,804 470,799 474,788 478,804 482,827 486,837 490,837 494,810 498,798 502,790 506,798 509,820 513,828 517,844 521,860 525,858 529,842 533,810 537,791 541,786 545,769 549,759 552,757 556,763 560,777 564,789 568,802 572,822 576,836 580,837 584,810 588,793 592,778 595,764 599,755 603,763 607,780 611,797 615,799 619,803 623,806 627,818 631,838 634,838 638,834 642,805 646,777 650,768 654,770 658,789 662,787 666,787 670,790 674,808 677,816 681,821 685,817 689,826 693,816 697,799 701,778 705,758 709,746 713,740 717,745 721,758`
  .split(' ').map(p => p.split(',').map(Number));
add('main-osc', line(292, 810.5, 916, 810.5, '#666') +
  '<g class="crisp">' + osc.slice(1).map(([x, y]) => line(x + .5, 810.5, x + .5, y, y < 810 ? '#0e7a16' : '#9c1414')).join('') + '</g>' +
  `<polyline fill="none" stroke="#159015" stroke-width="1.200" points="${osc.map(([x, y]) => `${x + .5},${y + .5}`).join(' ')}"/>
  <g transform="translate(285 715) scale(.33333)"><polyline fill="none" stroke="#8030a8" stroke-width="3.500" stroke-linejoin="round" points="22,213 35,190 50,184 65,192 80,212 95,248 110,290 130,320 150,350 175,378 195,410 215,450 230,480 245,491 262,490 275,475 290,445 310,418 335,385 355,367 372,363 390,338 410,305 430,287 450,281 470,285 490,297 510,310 530,322 550,312 570,307 590,314 615,331 640,329 665,312 690,297 710,303 735,321 770,321 790,303 805,278 825,265 880,267 900,255 925,228 950,214 970,216 995,235 1040,259 1065,258 1095,241 1120,242 1150,255 1210,268 1230,262 1260,239 1305,218"/></g>` +
  frame(291, 746, 626, 181));
add('axis-osc', [[778, '0.1'], [815, '0'], [853, '-0.1'], [891, '-0.2'], [928, '-0.3']].map(([y, s]) => text(918, y, s)).join('') +
  `<rect x="919" y="752" width="40" height="15" rx="3" fill="#0c8a0c"/>${text(921, 763, '0.1357', '', 'fill="#fff"')}
   <rect x="919" y="780" width="40" height="15" rx="3" fill="#7d28a8"/>${text(921, 791, '0.0628', '', 'fill="#fff"')}`);
add('main-times', [[314, '7:00'], [443, '7:30'], [537, '8:00'], [580, '8:20'], [650, '9:00'], [713, '9:30'], [756, '9:31']].map(([x, s]) => text(x, 940, s, 'ax', 'text-anchor="middle"')).join(''));

let rows = '';
for (let p = 10802; p >= 10770; p--) {
  rows += `<div class="lrow"><span></span><span class="bid${p === 10782 ? ' hit' : ''}">${p === 10782 ? '11' : ''}</span><span class="px${p === 10783 ? ' hit' : ''}">${(p / 100).toFixed(2)}</span><span class="ask${p === 10784 ? ' hit' : ''}">${p === 10784 ? '6' : ''}</span><span></span></div>`;
}
add('rows', rows);
```
